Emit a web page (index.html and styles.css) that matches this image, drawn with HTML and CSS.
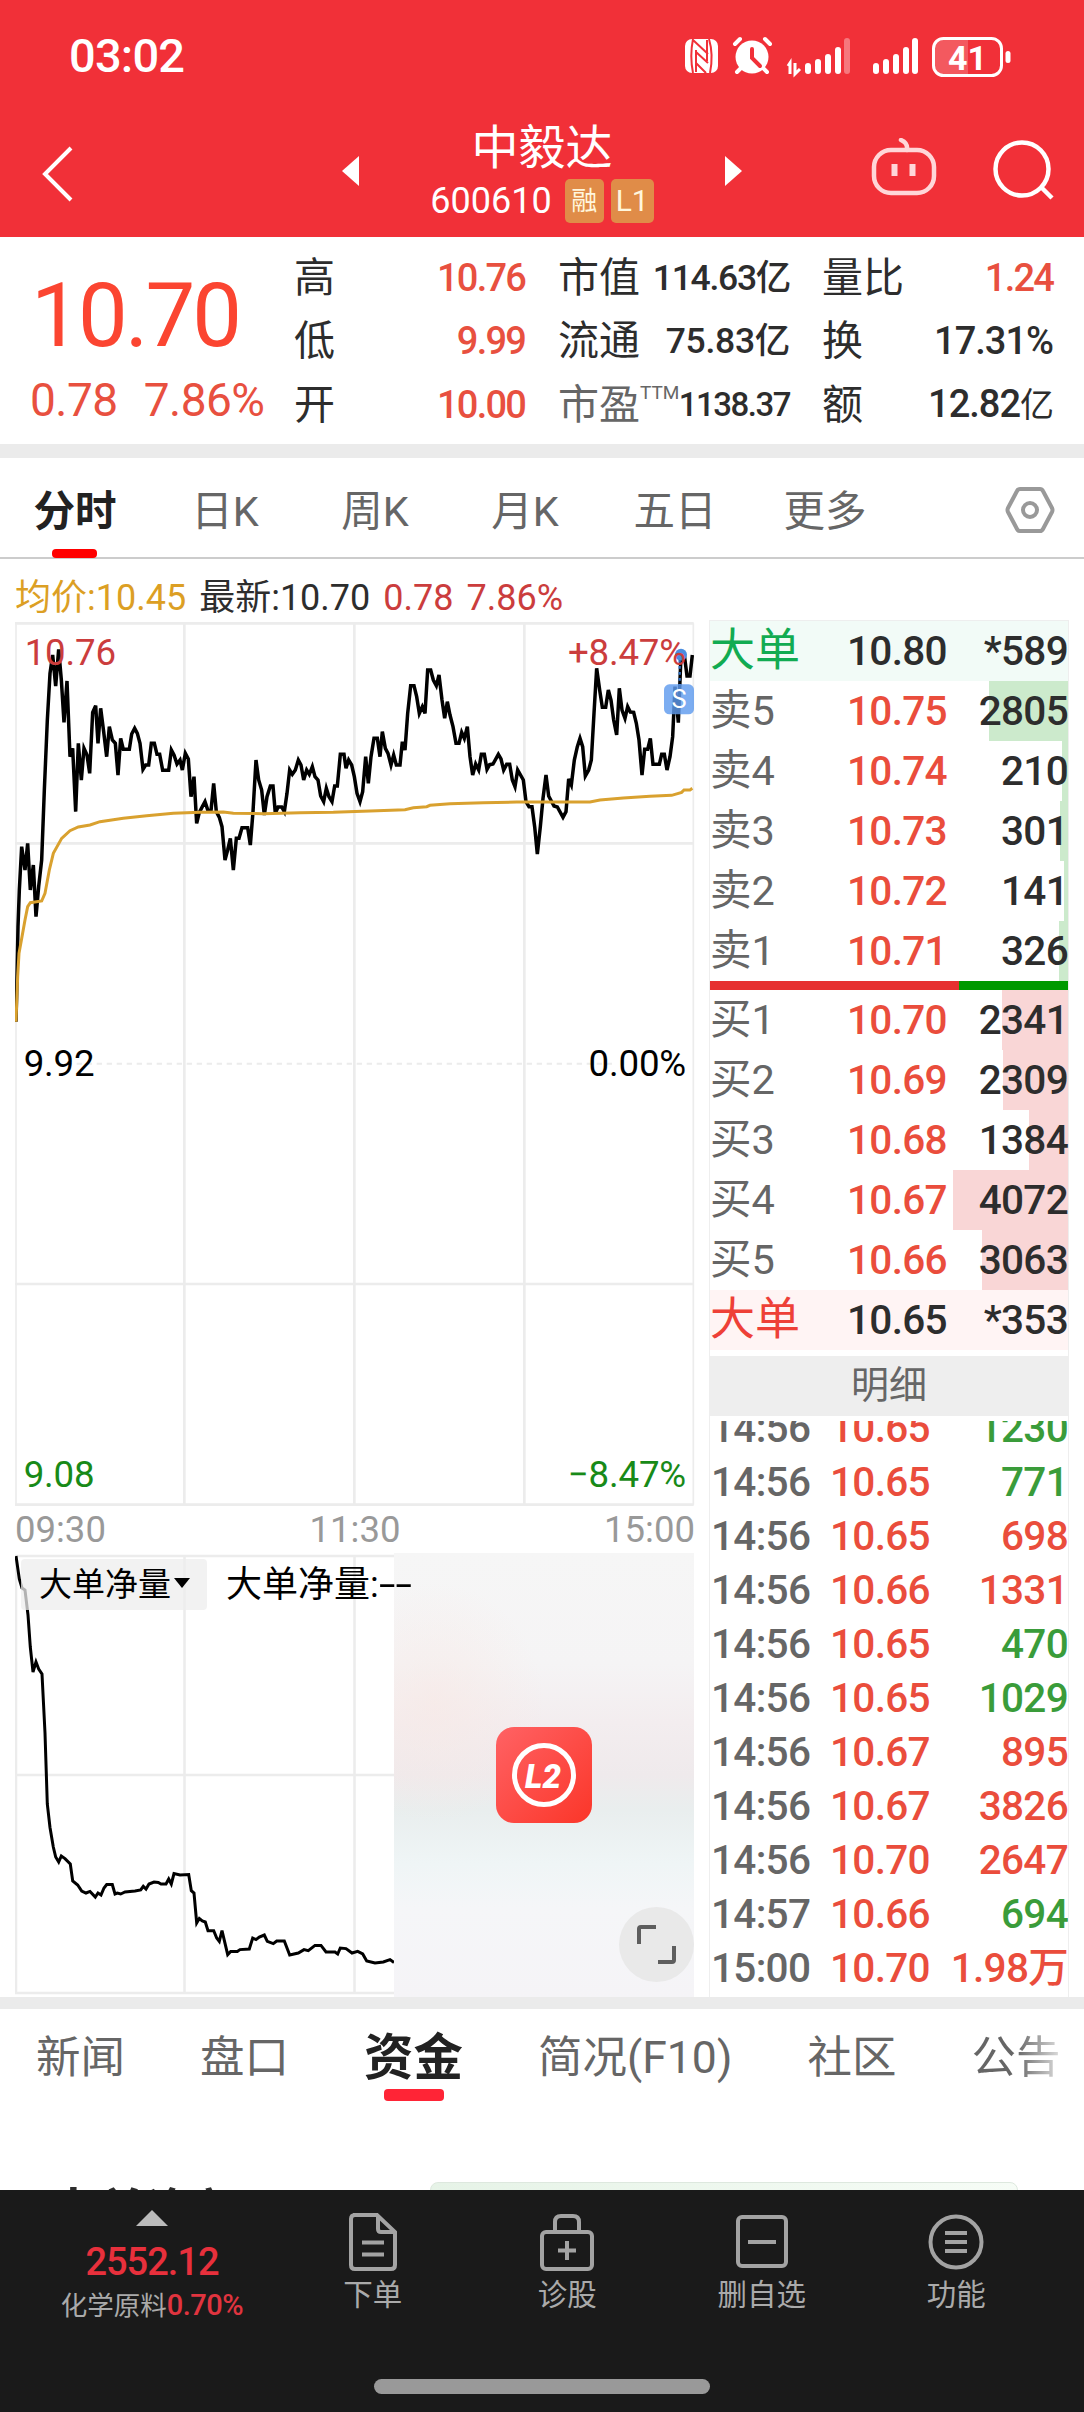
FILE: index.html
```
<!DOCTYPE html>
<html lang="zh-CN">
<head>
    <meta charset="UTF-8">
    <title>中毅达 600610</title>
    <link rel="stylesheet" href="styles.css">
</head>
<body>
    <header class="header">
        <div class="status">
            <span class="clock">03:02</span>
            <svg class="status-icons" width="330" height="44" viewBox="0 0 330 44" fill="#fff">
                <!-- nfc -->
                <rect x="1" y="4" width="33" height="34" rx="7"/>
                <path d="M9 4C7 14 7 28 9 38M25 4C28 14 28 28 26 38M9 5L24 19M12 17L24 28M12 28L22 38M12 15V37M23 5V26" stroke="#f13038" stroke-width="2" fill="none"/>
                <!-- alarm -->
                <circle cx="68" cy="22" r="16.5"/>
                <path d="M51 9L56 4M86 9L81 4M57 33L53 37M79 33L83 37" stroke="#fff" stroke-width="4" stroke-linecap="round"/>
                <path d="M68 14V23L76 31" stroke="#f13038" stroke-width="4" fill="none" stroke-linecap="round"/>
                <!-- signal 1 -->
                <path d="M106 39V28L104 31M111 28V39L116 34" stroke="#fff" stroke-width="3" fill="none"/>
                <rect x="121" y="28" width="6" height="11" rx="3"/>
                <rect x="131" y="24" width="6" height="15" rx="3"/>
                <rect x="141" y="19" width="6" height="20" rx="3"/>
                <rect x="151" y="12" width="6" height="27" rx="3"/>
                <rect x="160" y="3" width="6" height="36" rx="3" opacity=".35"/>
                <!-- signal 2 -->
                <rect x="189" y="28" width="6" height="11" rx="3"/>
                <rect x="199" y="24" width="6" height="15" rx="3"/>
                <rect x="209" y="19" width="6" height="20" rx="3"/>
                <rect x="219" y="12" width="6" height="27" rx="3"/>
                <rect x="228" y="3" width="6" height="36" rx="3"/>
                <!-- battery -->
                <path d="M254 3H284V40H254Q250 36 250 30V12Q250 5 254 3Z" opacity=".2"/>
                <rect x="249.5" y="3.5" width="68" height="37" rx="10" fill="none" stroke="#fff" stroke-width="3"/>
                <rect x="321.5" y="16" width="5" height="12" rx="2.5"/>
                <text x="283.5" y="34.5" class="battery-text">41</text>
            </svg>
        </div>
        <nav class="nav">
            <svg class="back" width="32" height="58" viewBox="0 0 32 58"><path d="M30 3L4 29L30 55" fill="none" stroke="#fff" stroke-width="4"/></svg>
            <svg class="prev" width="17" height="30"><path d="M0 15L17 0V30Z" fill="#fff"/></svg>
            <div class="stock">
                <div class="stock-name">中毅达</div>
                <div class="stock-code">600610 <b>融</b><b class="l1">L1</b></div>
            </div>
            <svg class="next" width="17" height="30"><path d="M17 15L0 0V30Z" fill="#fff"/></svg>
            <svg class="robot" width="66" height="58" viewBox="0 0 66 58" fill="none" stroke="#ffd6d8" stroke-width="4.5">
                <rect x="3" y="12" width="60" height="43" rx="17"/>
                <path d="M36 12Q37 5 30 2" stroke-linecap="round"/>
                <path d="M23.5 26V38M41.5 26V38" stroke-width="6"/>
            </svg>
            <svg class="search" width="62" height="60" viewBox="0 0 62 60" fill="none" stroke="#fff" stroke-width="4.5">
                <circle cx="29" cy="29" r="26.5"/>
                <path d="M48 47L59 58"/>
            </svg>
        </nav>
    </header>

    <section class="quote">
        <div class="quote-main">
            <div class="price">10.70</div>
            <div class="change"><span>0.78</span><span>7.86%</span></div>
        </div>
        <div class="stats">
            <div class="stat"><span>高</span><b class="up">10.76</b></div>
            <div class="stat"><span>市值</span><b class="small">114.63亿</b></div>
            <div class="stat"><span>量比</span><b class="up">1.24</b></div>
            <div class="stat"><span>低</span><b class="up">9.99</b></div>
            <div class="stat"><span>流通</span><b class="small wide">75.83亿</b></div>
            <div class="stat"><span>换</span><b>17.31%</b></div>
            <div class="stat"><span>开</span><b class="up">10.00</b></div>
            <div class="stat"><span class="gray">市盈<sup>TTM</sup></span><b class="tiny">1138.37</b></div>
            <div class="stat"><span>额</span><b>12.82<i>亿</i></b></div>
        </div>
    </section>

    <nav class="periods">
        <span class="active">分时</span>
        <span>日K</span>
        <span>周K</span>
        <span>月K</span>
        <span>五日</span>
        <span>更多</span>
        <svg width="50" height="48" viewBox="0 0 50 48" fill="none" stroke="#999" stroke-width="4">
            <path d="M15 3H35Q37 3 38 5L47 22Q48 24 47 26L38 43Q37 45 35 45H15Q13 45 12 43L3 26Q2 24 3 22L12 5Q13 3 15 3Z"/>
            <circle cx="25" cy="24" r="7"/>
        </svg>
    </nav>

    <main class="main">
        <div class="charts">
            <div class="legend">
                <span class="avg">均价:10.45</span>
                <span>最新:10.70</span>
                <span class="red">0.78</span>
                <span class="red">7.86%</span>
            </div>
            <svg class="chart" width="680" height="884" viewBox="45 186 2040 2652">
                <g class="grid">
                    <path d="M45 190H2081M45 850H2081M45 2172H2081M45 2834H2081"/>
                    <path d="M553 190V2834M1063 190V2834M1573 190V2834"/>
                    <path class="thin" d="M48 190V2834M2080 190V2834"/>
                    <path class="dash" d="M230 1511H1850"/>
                </g>
                <polyline class="price-line" points="48,1385 50,1300 54,1100 58,990 65,860 75,930 83,850 91,990 100,915 108,1070 116,980 125,900 133,690 142,480 150,340 158,285 167,378 176,268 184,360 192,487 201,363 210,590 218,565 227,755 235,550 244,660 252,565 261,585 269,640 278,457 287,437 294,550 302,445 311,515 320,590 328,500 337,540 346,550 354,645 362,535 370,568 388,568 395,522 404,505 412,520 420,550 429,628 437,615 446,615 454,550 463,550 471,583 479,583 488,631 506,631 514,570 522,585 531,612 540,600 547,630 556,580 565,597 573,710 582,650 590,790 598,757 607,740 615,725 624,752 633,752 641,670 649,755 658,772 666,800 675,900 683,870 691,835 700,930 709,835 717,835 726,803 743,803 751,855 759,755 768,600 776,660 785,690 793,765 801,710 811,678 819,678 826,760 834,741 845,741 853,755 861,700 869,630 877,643 886,630 895,600 903,615 911,660 920,630 928,643 937,620 945,650 954,660 962,708 971,725 979,685 987,710 996,725 1004,678 1012,678 1021,583 1032,583 1038,625 1046,600 1055,615 1063,650 1071,700 1080,725 1088,695 1097,590 1105,670 1113,590 1122,535 1132,535 1140,590 1147,515 1156,565 1164,580 1173,615 1181,585 1189,615 1200,615 1207,545 1215,570 1223,460 1232,377 1242,377 1250,410 1258,460 1267,440 1275,460 1283,330 1292,330 1300,360 1309,377 1317,345 1326,420 1334,475 1342,425 1350,465 1359,500 1368,550 1377,550 1385,517 1393,535 1402,500 1410,590 1418,645 1427,612 1436,630 1444,583 1453,583 1461,628 1469,614 1479,612 1495,583 1503,597 1511,630 1520,613 1529,613 1537,660 1545,680 1553,630 1570,660 1578,725 1587,740 1596,740 1604,800 1612,882 1621,800 1629,715 1638,645 1646,708 1662,738 1672,741 1689,772 1698,755 1706,657 1714,675 1723,600 1732,560 1740,535 1748,560 1756,648 1766,630 1774,600 1782,460 1790,325 1799,390 1807,442 1817,442 1825,390 1833,420 1841,480 1850,525 1858,385 1866,450 1875,475 1883,440 1891,456 1901,457 1909,490 1917,540 1926,645 1934,568 1943,568 1951,535 1959,613 1978,613 1985,583 1993,583 2001,630 2010,590 2018,530 2025,380 2035,488 2043,285 2053,285 2061,348 2070,348 2077,285"/>
                <polyline class="avg-line" points="48,1385 53,1250 57,1180 66,1130 75,1080 83,1040 91,1028 125,1023 135,1000 148,930 160,880 185,835 210,812 235,801 270,795 300,785 370,775 440,767 520,760 600,757 670,756 700,760 790,761 900,758 1000,757 1110,753 1215,749 1240,743 1280,740 1290,736 1350,731 1450,728 1550,726 1770,726 1800,720 1870,714 1950,709 2015,706 2045,697 2052,690 2070,690 2077,685"/>
                <!-- sell marker -->
                <circle cx="2043" cy="284" r="18" fill="#4a8de0"/>
                <path d="M2039 300V375" stroke="#2f6fc0" stroke-width="7" stroke-dasharray="8 10"/>
                <rect x="1992" y="373" width="90" height="90" rx="16" fill="#5f9bee" opacity=".82"/>
                <text x="2037" y="443" class="mark">S</text>
                <g class="labels">
                    <text x="74" y="314" class="t-red">10.76</text>
                    <text x="2058" y="314" class="t-red end">+8.47%</text>
                    <text x="71" y="1549">9.92</text>
                    <text x="2058" y="1549" class="end">0.00%</text>
                    <text x="71" y="2781" class="t-green">9.08</text>
                    <text x="2058" y="2781" class="t-green end">−8.47%</text>
                </g>
            </svg>
            <div class="times"><span>09:30</span><span>11:30</span><span>15:00</span></div>
            <div class="flow">
                <svg width="680" height="444" viewBox="0 -1 680 444">
                    <path class="flow-grid" d="M0 2H679M0 221H679M0 439H679M169.5 2V439M339.5 2V439M1 2V439"/>
                    <polyline class="flow-line" points="1,2 4.3,25 7,34 10,36 13,61 15.3,93 18,118 21,108 23.7,115 27,120 30,179 32.3,250 35,273.5 38.3,293 40.7,303 43.7,308 46.3,302 50,304.6 55.3,310 57.7,327 62.7,331 66.7,337 71,339 75,337.4 80.3,343 83,339 86,341 89,334 91.7,330.6 97.3,330.6 100,340 102.3,339 105.7,340 110,338 120,337 125.7,336 128.3,332.4 131,335 134,330 139,328 143.3,328.5 146,330 151,330 153.7,325 156.3,330 159,319.6 165,321 173.7,320.6 176.3,336.7 179,339 181.7,369 184.3,364.6 187.3,367 190.3,368 193,376.7 198.7,376.7 201.7,384 204.3,387.4 207,376.7 212.7,400.6 215.7,397.4 222.3,397.4 225,395.6 234.3,395 237.7,384 241,385.6 244.3,383 249.3,381 252.3,387.4 258.3,389.6 261.7,387 269.3,387 274.7,401 283.3,399 289,395.6 293.3,396.7 300,391.4 306,391.4 311,398 320,398 322.7,400 325.3,394 331,394.6 337,399 342.7,397.4 347.7,400 351.7,407 360,409 368.3,408 375,405.6 379,408.5"/>
                </svg>
                <div class="mask">
                    <svg width="96" height="96" viewBox="0 0 96 96">
                        <defs>
                            <linearGradient id="l2" x1="0" y1="0" x2="1" y2="1">
                                <stop offset="0" stop-color="#ff6264"/>
                                <stop offset="1" stop-color="#fb3629"/>
                            </linearGradient>
                        </defs>
                        <rect width="96" height="96" rx="18" fill="url(#l2)"/>
                        <circle cx="48" cy="48" r="29.5" fill="none" stroke="#fff" stroke-width="5"/>
                        <text x="47" y="60.5" class="l2-text">L2</text>
                    </svg>
                </div>
                <div class="flow-head">
                    <span class="picker">大单净量<i></i></span>
                    <span class="flow-name">大单净量:<i>--</i></span>
                </div>
                <svg class="expand" width="75" height="75" viewBox="0 0 75 75">
                    <circle cx="37.5" cy="37.5" r="37.5" fill="#e9e9e9"/>
                    <path d="M20 37V22Q20 20 22 20H37M55 39V53Q55 55 53 55H39" fill="none" stroke="#5e5e5e" stroke-width="4"/>
                </svg>
            </div>
        </div>

        <aside class="book">
            <div class="order big-sell"><span>大单</span><b>10.80</b><em>*589</em></div>
            <div class="order sell" style="background-size: 79px 100%"><span>卖5</span><b>10.75</b><em>2805</em></div>
            <div class="order sell" style="background-size: 6px 100%"><span>卖4</span><b>10.74</b><em>210</em></div>
            <div class="order sell" style="background-size: 8px 100%"><span>卖3</span><b>10.73</b><em>301</em></div>
            <div class="order sell" style="background-size: 4px 100%"><span>卖2</span><b>10.72</b><em>141</em></div>
            <div class="order sell" style="background-size: 9px 100%"><span>卖1</span><b>10.71</b><em>326</em></div>
            <div class="ratio"></div>
            <div class="order buy" style="background-size: 66px 100%"><span>买1</span><b>10.70</b><em>2341</em></div>
            <div class="order buy" style="background-size: 65px 100%"><span>买2</span><b>10.69</b><em>2309</em></div>
            <div class="order buy" style="background-size: 39px 100%"><span>买3</span><b>10.68</b><em>1384</em></div>
            <div class="order buy" style="background-size: 115px 100%"><span>买4</span><b>10.67</b><em>4072</em></div>
            <div class="order buy" style="background-size: 86px 100%"><span>买5</span><b>10.66</b><em>3063</em></div>
            <div class="order big-buy"><span>大单</span><b>10.65</b><em>*353</em></div>
            <div class="detail-title">明细</div>
            <div class="ticks">
                <div class="tick"><span>14:56</span><b>10.65</b><em class="green">1230</em></div>
                <div class="tick"><span>14:56</span><b>10.65</b><em class="green">771</em></div>
                <div class="tick"><span>14:56</span><b>10.65</b><em>698</em></div>
                <div class="tick"><span>14:56</span><b>10.66</b><em>1331</em></div>
                <div class="tick"><span>14:56</span><b>10.65</b><em class="green">470</em></div>
                <div class="tick"><span>14:56</span><b>10.65</b><em class="green">1029</em></div>
                <div class="tick"><span>14:56</span><b>10.67</b><em>895</em></div>
                <div class="tick"><span>14:56</span><b>10.67</b><em>3826</em></div>
                <div class="tick"><span>14:56</span><b>10.70</b><em>2647</em></div>
                <div class="tick"><span>14:57</span><b>10.66</b><em class="green">694</em></div>
                <div class="tick"><span>15:00</span><b>10.70</b><em>1.98万</em></div>
            </div>
        </aside>
    </main>

    <nav class="tabs">
        <span>新闻</span>
        <span>盘口</span>
        <span class="active">资金</span>
        <span>简况(F10)</span>
        <span>社区</span>
        <span class="fade">公告</span>
    </nav>
    <section class="funds">
        <h2>大单净额</h2>
        <div class="funds-card"></div>
    </section>

    <footer class="footer">
        <div class="index">
            <i class="arrow"></i>
            <b>2552.12</b>
            <p>化学原料<span>0.70%</span></p>
        </div>
        <div class="item">
            <svg width="60" height="60" viewBox="0 0 60 60">
                <path d="M10 3H34L52 20V53Q52 57 48 57H12Q8 57 8 53V7Q8 3 12 3M35 4V17Q35 20 38 20H51M19 30.5H41M19 42.5H41"/>
            </svg>
            <span>下单</span>
        </div>
        <div class="item">
            <svg width="60" height="60" viewBox="0 0 60 60">
                <rect x="5" y="20" width="50" height="37" rx="4"/>
                <path d="M18 20V10Q18 4 24 4H36Q42 4 42 10V20M30 29V48M21 38.5H39"/>
            </svg>
            <span>诊股</span>
        </div>
        <div class="item">
            <svg width="60" height="60" viewBox="0 0 60 60">
                <rect x="6" y="5" width="48" height="49" rx="4"/>
                <path d="M16 30H44"/>
            </svg>
            <span>删自选</span>
        </div>
        <div class="item">
            <svg width="60" height="60" viewBox="0 0 60 60">
                <circle cx="30" cy="30" r="25.5"/>
                <path d="M19 21H41M19 30H41M19 39H41"/>
            </svg>
            <span>功能</span>
        </div>
        <div class="home"></div>
    </footer>
</body>
</html>
```

FILE: styles.css
```
* {
    box-sizing: border-box;
}
body {
    margin: 0;
    width: 1084px;
    height: 2412px;
    overflow: hidden;
    display: flex;
    flex-direction: column;
    background-color: #fff;
    color: #2d2d2d;
    font-family: Roboto, "Noto Sans CJK SC", sans-serif;
}
b, em, i, h2 {
    font-weight: normal;
    font-style: normal;
}
svg {
    display: block;
    flex: none;
}

/* header */
.header {
    height: 237px;
    flex: none;
    background-color: #f13038;
    color: #fff;
}
.status {
    display: flex;
    justify-content: space-between;
    height: 112px;
    padding: 35px 70px 0 69px;
}
.clock {
    font-size: 47px;
    line-height: 42px;
    font-weight: 500;
    letter-spacing: -0.8px;
}
.battery-text {
    font-size: 34px;
    font-weight: bold;
    text-anchor: middle;
}
.nav {
    display: flex;
    align-items: flex-start;
    height: 125px;
}
.back {
    margin: 33px 0 0 41px;
}
.prev {
    margin: 44px 0 0 269px;
}
.stock {
    width: 366px;
    text-align: center;
}
.stock-name {
    font-size: 47px;
    line-height: 50px;
    margin-top: 11px;
}
.stock-code {
    display: flex;
    justify-content: center;
    align-items: center;
    gap: 7px;
    margin-top: 6px;
    font-size: 36px;
    line-height: 44px;
}
.stock-code b {
    width: 39px;
    height: 44px;
    margin-left: 6px;
    border-radius: 5px;
    background-color: #e08c48;
    color: #fff6dc;
    font-size: 26px;
}
.stock-code .l1 {
    width: 43px;
    margin-left: 0;
    font-size: 30px;
}
.next {
    margin-top: 44px;
}
.robot {
    margin: 26px 0 0 129px;
}
.search {
    margin: 28px 0 0 56px;
}

/* quote */
.quote {
    display: flex;
    height: 221px;
    flex: none;
    border-bottom: 14px solid #ebebeb;
}
.quote-main {
    width: 295px;
    padding-left: 30px;
}
.price {
    margin-top: 34px;
    padding-left: 1px;
    font-size: 88.5px;
    line-height: 90px;
    letter-spacing: -2.8px;
    color: #fb4531;
}
.change {
    display: flex;
    gap: 26px;
    margin-top: 14px;
    font-size: 46px;
    line-height: 50px;
    letter-spacing: -0.5px;
    color: #e8503f;
}
.stats {
    display: grid;
    grid-template-columns: 231px 231px 231px;
    grid-auto-rows: 63.5px;
    column-gap: 33px;
    padding-top: 9px;
}
.stat {
    display: flex;
    justify-content: space-between;
    align-items: center;
    font-size: 41px;
    line-height: 60px;
    white-space: nowrap;
}
.stat span {
    margin-left: -1px;
}
.stat b {
    margin-right: 1px;
    font-size: 38px;
    font-weight: 500;
    letter-spacing: -1px;
}
.stat i {
    font-size: 34px;
}
.stat .up {
    color: #e8503f;
    letter-spacing: -1.8px;
}
.stat .small {
    margin-right: 0;
    font-size: 35.5px;
    letter-spacing: -1.3px;
}
.stat .wide {
    letter-spacing: -0.3px;
}
.stat .tiny {
    margin-right: 0;
    font-size: 33px;
    letter-spacing: -1.5px;
}
.gray {
    color: #666;
}
.stat sup {
    font-size: 19px;
    line-height: 0;
    vertical-align: 20px;
    margin-right: -10px;
}

/* period tabs */
.periods {
    display: flex;
    align-items: center;
    height: 101px;
    flex: none;
    padding: 0 29px 0 0;
    border-bottom: 2px solid #ccc;
    color: #666;
    font-size: 41.5px;
}
.periods span {
    width: 150px;
    text-align: center;
}
.periods .active {
    position: relative;
    color: #222;
    font-weight: bold;
}
.periods .active::after {
    content: "";
    position: absolute;
    left: 52px;
    bottom: -20px;
    width: 45px;
    height: 9px;
    border-radius: 4px;
    background-color: #f00;
}
.periods svg {
    margin: 5px 0 0 auto;
}

/* charts */
.main {
    display: flex;
    justify-content: space-between;
    height: 1450px;
    flex: none;
    padding: 0 15px;
    border-bottom: 12px solid #ebebeb;
}
.charts {
    width: 680px;
}
.legend {
    display: flex;
    gap: 13px;
    height: 63px;
    padding-top: 8px;
    font-size: 36px;
    line-height: 62px;
    white-space: nowrap;
}
.avg {
    color: #dc9f24;
}
.red {
    color: #cb3d3d;
}
.grid path {
    fill: none;
    stroke: #ececec;
    stroke-width: 8;
}
.grid .thin {
    stroke-width: 5;
}
.grid .dash {
    stroke-width: 6;
    stroke-dasharray: 16 14;
}
.price-line {
    fill: none;
    stroke: #000;
    stroke-width: 10.5;
}
.avg-line {
    fill: none;
    stroke: #d9a12f;
    stroke-width: 9;
}
.labels {
    font-size: 110px;
    letter-spacing: -0.5px;
}
.labels .end {
    text-anchor: end;
}
.t-red {
    fill: #cb3d3d;
}
.t-green {
    fill: #188a18;
}
.mark {
    fill: #fff;
    font-size: 76px;
    text-anchor: middle;
}
.times {
    display: flex;
    justify-content: space-between;
    height: 47px;
    color: #999;
    font-size: 36.5px;
    line-height: 48px;
}
.flow {
    position: relative;
    height: 444px;
}
.flow-grid {
    fill: none;
    stroke: #ececec;
    stroke-width: 2.5;
}
.flow-line {
    fill: none;
    stroke: #000;
    stroke-width: 3;
}
/* locked half of the chart */
.mask {
    position: absolute;
    top: 0;
    right: 1px;
    width: 300px;
    height: 444px;
    display: flex;
    justify-content: center;
    align-items: center;
    background:
        radial-gradient(ellipse 110px 120px at 40px 150px, rgba(248, 232, 228, 0.6), transparent),
        linear-gradient(#f6f6f6, #f5f4f5 25%, #f3edef 38%, #efeaec 50%, #e9eeee 58%, #eff5f6 70%, #f5f6f8 80%, #f5f4f7);
}
.l2-text {
    fill: #fff;
    font-size: 33px;
    font-weight: 900;
    font-style: italic;
    text-anchor: middle;
}
.flow-head {
    position: absolute;
    top: 6px;
    left: 6px;
    display: flex;
    color: #000;
    line-height: 53px;
}
.picker {
    display: flex;
    align-items: center;
    width: 186px;
    height: 51px;
    padding-left: 18px;
    border-radius: 4px;
    background-color: rgba(238, 238, 238, 0.75);
    font-size: 33px;
}
.picker i {
    margin: -4px 0 0 3px;
    border: 8px solid transparent;
    border-top: 10px solid #000;
    border-bottom: 0;
}
.flow-name {
    margin-left: 19px;
    font-size: 36px;
}
.flow-name i {
    display: inline-block;
    transform: scaleX(1.65);
    transform-origin: left;
}
.expand {
    position: absolute;
    right: 1px;
    bottom: 15px;
}

/* order book */
.book {
    display: flex;
    flex-direction: column;
    width: 360px;
    margin-top: 61px;
    border: 1px solid #eee;
    border-bottom: 0;
}
.order {
    display: grid;
    grid-template-columns: 137px 110px 1fr;
    height: 60px;
    flex: none;
    line-height: 60px;
    background-repeat: no-repeat;
    background-position: right;
}
.order span {
    font-size: 41.5px;
    color: #666;
}
.order b, .order em, .tick, .tick b, .tick em {
    font-size: 40.5px;
    font-weight: 500;
    letter-spacing: -0.7px;
}
.order b {
    color: #ea4d3c;
}
.order em {
    text-align: right;
}
.sell {
    background-image: linear-gradient(#cceacc, #cceacc);
}
.buy {
    background-image: linear-gradient(#f9d6d6, #f9d6d6);
}
.big-sell {
    background-color: #f2fbf7;
}
.big-buy {
    background-color: #fff4f4;
}
.order.big-sell span {
    color: #12ab52;
    font-size: 45px;
}
.order.big-buy span {
    color: #ee4037;
    font-size: 45px;
}
.order.big-sell b, .order.big-buy b {
    color: #2d2d2d;
}
.ratio {
    height: 9px;
    flex: none;
    background: linear-gradient(90deg, #e63030 249px, #009900 249px);
}
.detail-title {
    height: 60px;
    flex: none;
    margin-top: 6px;
    background-color: #eee;
    color: #666;
    font-size: 38px;
    line-height: 58px;
    text-align: center;
}
.ticks {
    display: flex;
    flex-direction: column;
    justify-content: flex-end;
    flex: 1;
    min-height: 0;
    margin-top: 5px;
    padding-bottom: 2px;
    overflow: hidden;
}
.tick {
    display: grid;
    grid-template-columns: 119px 110px 1fr;
    height: 54px;
    flex: none;
    padding-left: 1px;
    line-height: 54px;
    color: #ea4d3c;
}
.tick span {
    color: #666;
}
.tick em {
    text-align: right;
}
.tick .green {
    color: #3a9c3a;
}

/* info tabs */
.tabs {
    display: flex;
    height: 173px;
    flex: none;
    padding-left: 36px;
    color: #666;
    font-size: 44.5px;
    line-height: 98px;
    white-space: nowrap;
}
.tabs span {
    margin-right: 75px;
}
.tabs .active {
    position: relative;
    color: #222;
    font-size: 49.5px;
    font-weight: bold;
}
.tabs .active::after {
    content: "";
    position: absolute;
    left: 20px;
    top: 80px;
    width: 60px;
    height: 12px;
    border-radius: 4px;
    background-color: #ff2436;
}
.tabs .fade {
    margin: 0;
    background: linear-gradient(90deg, #666 45px, #ddd);
    background-clip: text;
    color: transparent;
}
.funds {
    display: flex;
    height: 8px;
    flex: none;
    overflow: hidden;
    padding-left: 49px;
}
.funds h2 {
    width: 381px;
    margin: 0;
    font-size: 49px;
    line-height: 62px;
    font-weight: bold;
}
.funds-card {
    width: 588px;
    height: 60px;
    border: 1px solid #dde8de;
    border-radius: 8px;
    background: linear-gradient(90deg, #e6f3e7, #f6fcf6);
}

/* footer */
.footer {
    display: grid;
    grid-template-columns: 244px repeat(4, 194.5px);
    grid-template-rows: 189px 15px;
    height: 222px;
    flex: none;
    padding: 0 30px;
    background-color: #1a1a1a;
    color: #aaa;
}
.index {
    display: flex;
    flex-direction: column;
    align-items: center;
}
.arrow {
    margin-top: 20px;
    border: 16px solid transparent;
    border-top: 0;
    border-bottom: 16px solid #bbb;
}
.index b {
    margin-top: 14px;
    color: #e8303c;
    font-size: 38px;
    font-weight: 500;
    line-height: 44px;
    letter-spacing: -1px;
}
.index p {
    margin: 4px 0 0;
    font-size: 26.5px;
    line-height: 34px;
}
.index p span {
    color: #e0343f;
    font-size: 29px;
    letter-spacing: -0.5px;
    font-weight: 500;
}
.item {
    display: flex;
    flex-direction: column;
    align-items: center;
    padding: 22px 0 0 3px;
    font-size: 29.5px;
}
.item svg {
    fill: none;
    stroke: #a3a3a3;
    stroke-width: 4;
}
.item span {
    margin-top: 3px;
    line-height: 40px;
}
.home {
    grid-column: 1 / -1;
    width: 336px;
    margin-left: 2px;
    justify-self: center;
    border-radius: 8px;
    background-color: #999;
}
```
